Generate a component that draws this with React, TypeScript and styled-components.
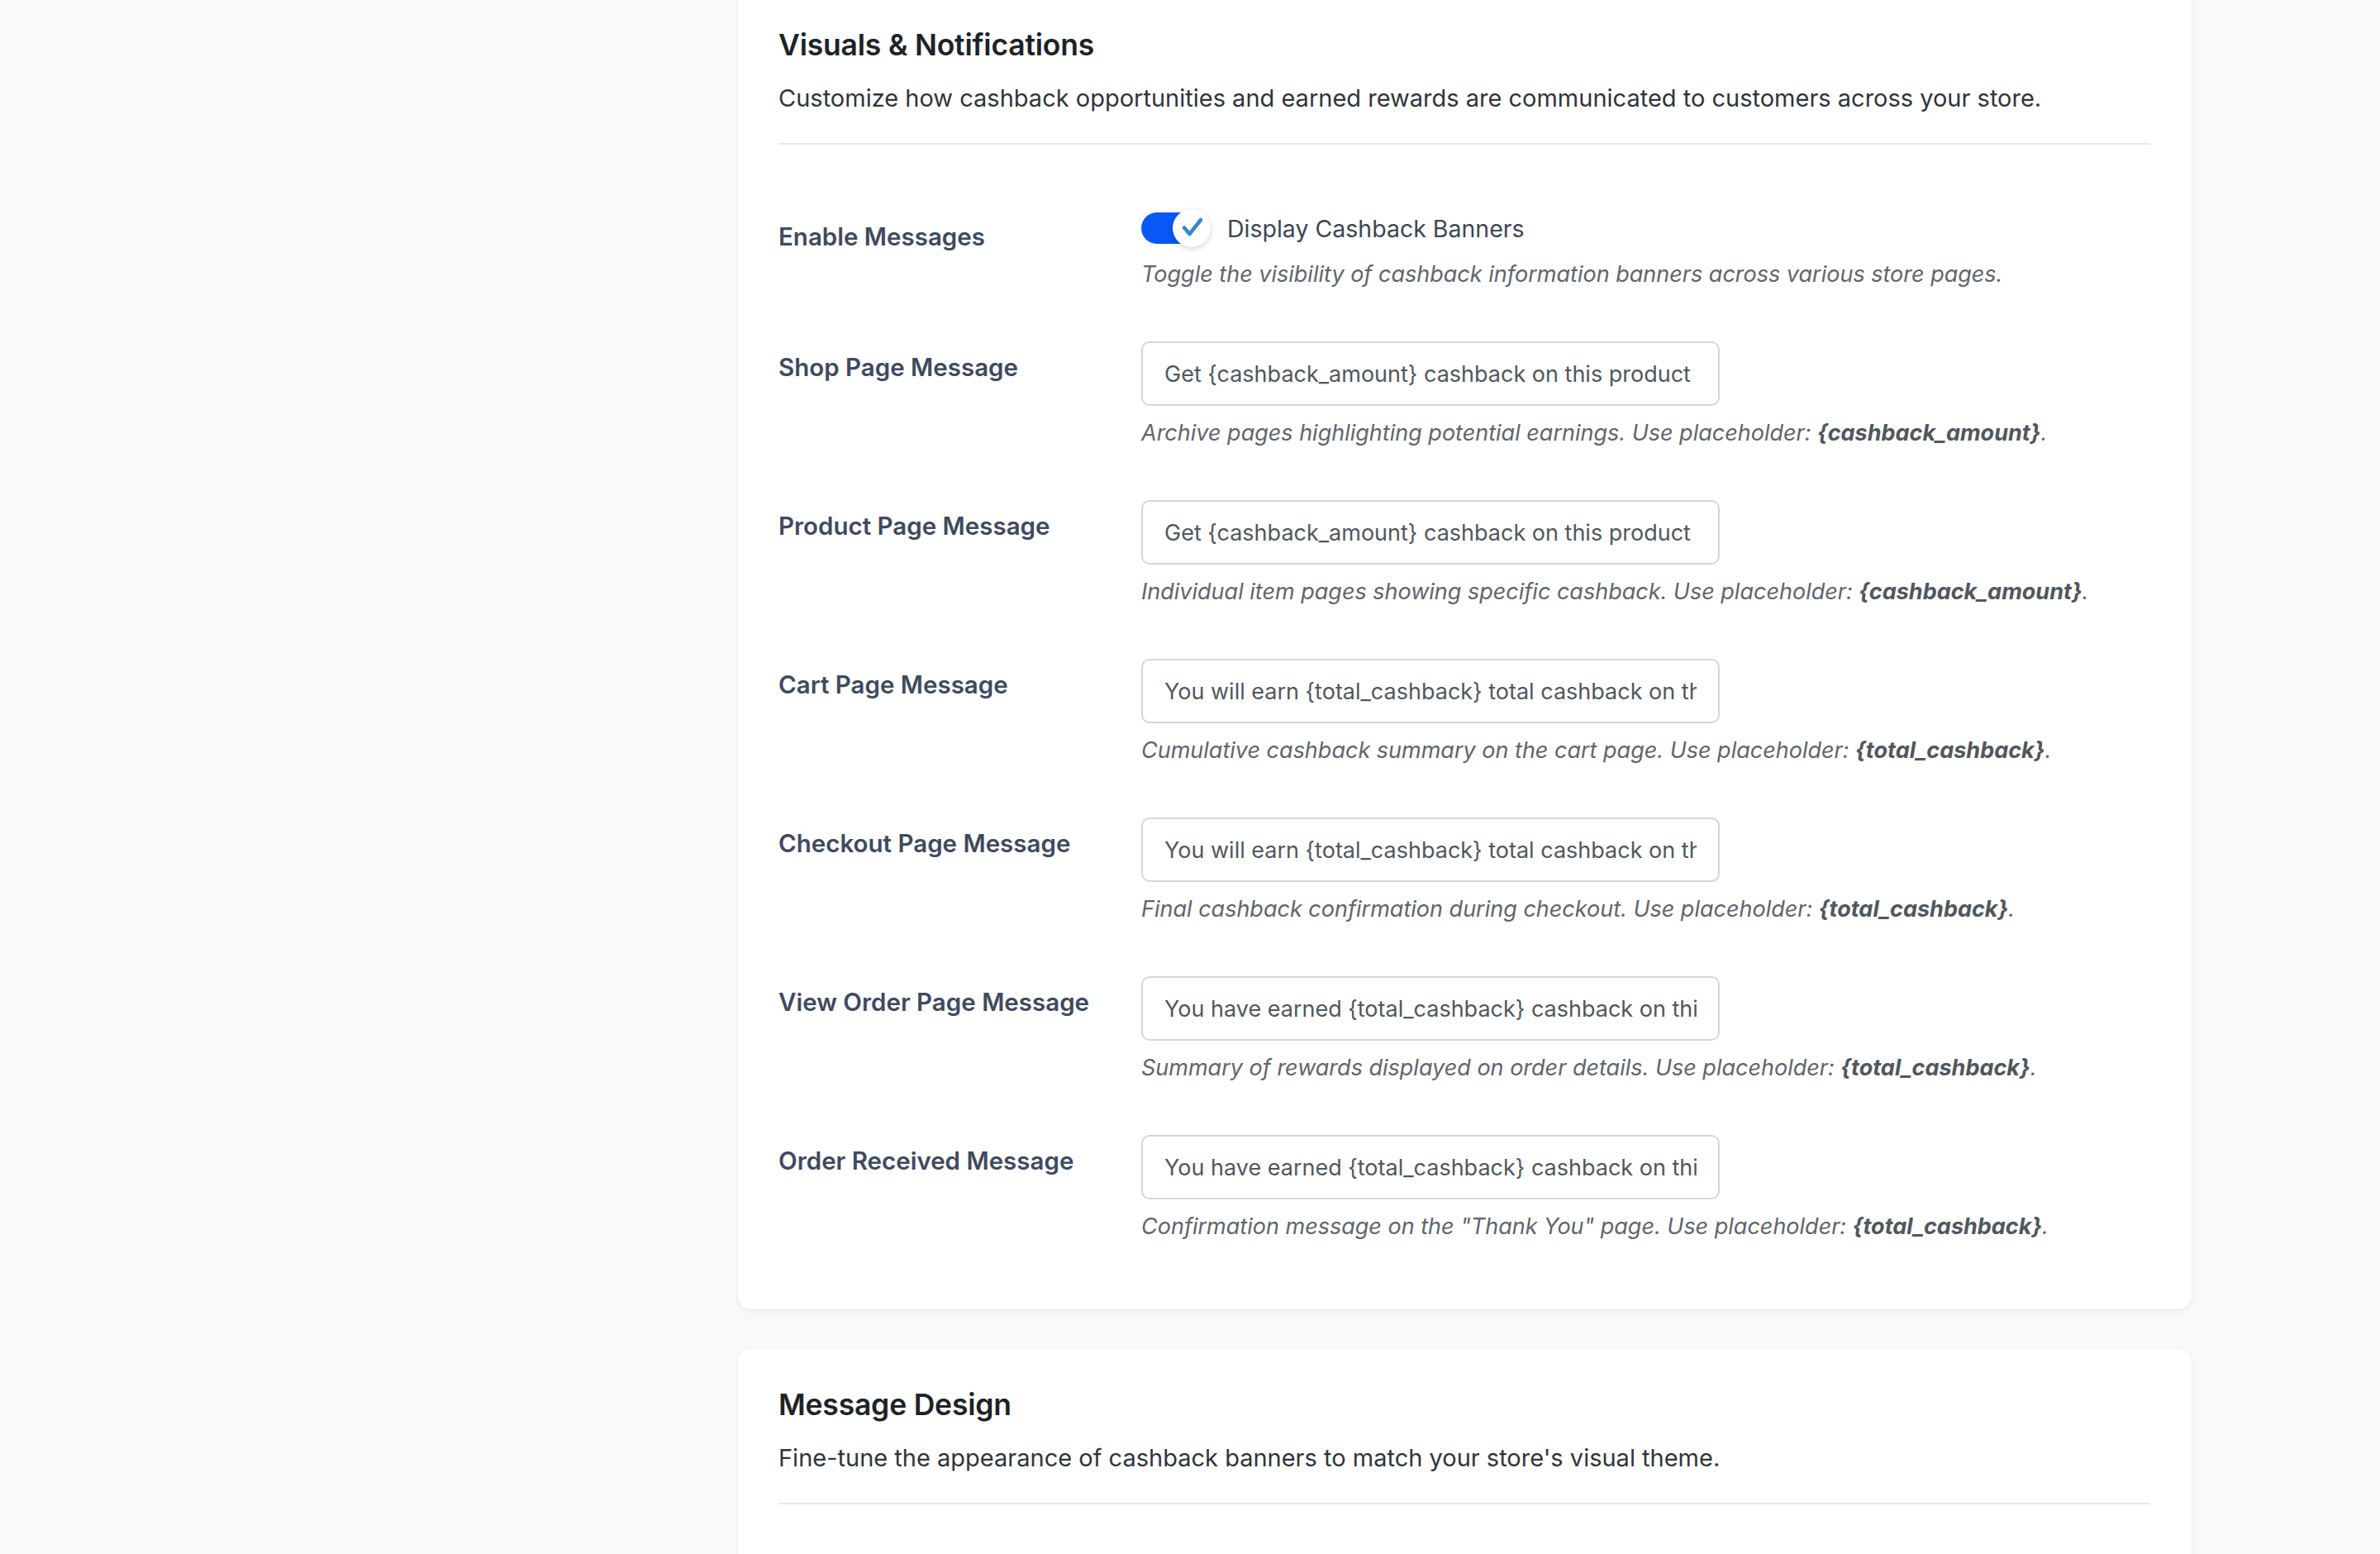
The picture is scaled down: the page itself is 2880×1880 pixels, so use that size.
import React from 'react';
import styled, { createGlobalStyle } from 'styled-components';

const GlobalStyle = createGlobalStyle`
  html, body {
    margin: 0;
    padding: 0;
    background: #f8f9fb;
  }
  body {
    font-family: Inter, "Noto Sans", "Liberation Sans", sans-serif;
    -webkit-font-smoothing: antialiased;
  }
  * {
    box-sizing: border-box;
  }
`;

const Page = styled.div`
  margin-top: -13px;
  padding-left: 893px;
  width: 2652px;
`;

const Card = styled.section<{ $last?: boolean }>`
  background: #ffffff;
  border-radius: 16px;
  box-shadow: 0 2px 8px rgba(16, 24, 40, 0.05), 0 1px 2px rgba(16, 24, 40, 0.04);
  padding: 44px 50px ${(p) => (p.$last ? '240px' : '50px')} 49px;
  margin-bottom: 48px;
`;

const CardHeader = styled.header`
  padding-bottom: 32px;
  border-bottom: 2px solid #e7e8eb;
`;

const Title = styled.h2`
  margin: 0;
  font-size: 35.5px;
  line-height: 48px;
  font-weight: 600;
  color: #1d2327;
  letter-spacing: -0.2px;
`;

const Intro = styled.p`
  margin: 18px 0 0;
  font-size: 29px;
  line-height: 44px;
  color: #2f353b;
`;

const Form = styled.div`
  margin-top: 44px;
`;

const Row = styled.div`
  display: grid;
  grid-template-columns: 439px 1fr;
  padding: 31px 0 32px;
`;

const Label = styled.div<{ $offset?: number }>`
  padding-top: ${(p) => p.$offset ?? 12}px;
  font-size: 29.5px;
  line-height: 38px;
  font-weight: 600;
  color: #3e4a5e;
`;

const Field = styled.div`
  display: flex;
  flex-direction: column;
`;

const ToggleLine = styled.label`
  display: flex;
  align-items: center;
  height: 46px;
  margin-top: 3px;
  gap: 22px;
  font-size: 28.5px;
  color: #3d4655;
  cursor: pointer;
`;

const Track = styled.span`
  position: relative;
  display: inline-block;
  width: 82px;
  height: 38px;
  border-radius: 19px;
  background: #0758f6;
  flex-shrink: 0;
`;

const Knob = styled.span`
  position: absolute;
  top: -4px;
  right: -2px;
  width: 46px;
  height: 46px;
  border-radius: 50%;
  background: #ffffff;
  box-shadow: 0 2px 6px rgba(0, 0, 0, 0.18);
  display: flex;
  align-items: center;
  justify-content: center;
`;

const TextInput = styled.input`
  width: 700px;
  height: 78px;
  padding: 0 26px;
  border: 2px solid #d4d6da;
  border-radius: 10px;
  background: #ffffff;
  font-family: inherit;
  font-size: 27px;
  color: #50575e;
  outline: none;
`;

const Help = styled.p`
  margin: 15px 0 0;
  font-size: 27px;
  line-height: 36px;
  font-style: italic;
  color: #5f656c;

  strong {
    font-weight: 700;
    color: #50575e;
  }
`;

type MessageRow = {
  label: string;
  value: string;
  help: string;
  token: string;
};

const rows: MessageRow[] = [
  {
    label: 'Shop Page Message',
    value: 'Get {cashback_amount} cashback on this product',
    help: 'Archive pages highlighting potential earnings. Use placeholder: ',
    token: '{cashback_amount}',
  },
  {
    label: 'Product Page Message',
    value: 'Get {cashback_amount} cashback on this product',
    help: 'Individual item pages showing specific cashback. Use placeholder: ',
    token: '{cashback_amount}',
  },
  {
    label: 'Cart Page Message',
    value: 'You will earn {total_cashback} total cashback on this order',
    help: 'Cumulative cashback summary on the cart page. Use placeholder: ',
    token: '{total_cashback}',
  },
  {
    label: 'Checkout Page Message',
    value: 'You will earn {total_cashback} total cashback on this order',
    help: 'Final cashback confirmation during checkout. Use placeholder: ',
    token: '{total_cashback}',
  },
  {
    label: 'View Order Page Message',
    value: 'You have earned {total_cashback} cashback on this order',
    help: 'Summary of rewards displayed on order details. Use placeholder: ',
    token: '{total_cashback}',
  },
  {
    label: 'Order Received Message',
    value: 'You have earned {total_cashback} cashback on this order',
    help: 'Confirmation message on the "Thank You" page. Use placeholder: ',
    token: '{total_cashback}',
  },
];

const Check = () => (
  <svg width="46" height="46" viewBox="0 0 46 46" fill="none">
    <path
      d="M14 22.5 L20.5 30 L34 13"
      stroke="#3a86c8"
      strokeWidth="4.5"
      strokeLinecap="round"
      strokeLinejoin="round"
    />
  </svg>
);

const App = () => {
  return (
    <Page>
      <GlobalStyle />

      {/* Visuals & Notifications */}
      <Card>
        <CardHeader>
          <Title>Visuals &amp; Notifications</Title>
          <Intro>
            Customize how cashback opportunities and earned rewards are communicated to customers across your store.
          </Intro>
        </CardHeader>

        <Form>
          <Row>
            <Label $offset={17}>Enable Messages</Label>
            <Field>
              <ToggleLine>
                <Track>
                  <Knob>
                    <Check />
                  </Knob>
                </Track>
                Display Cashback Banners
              </ToggleLine>
              <Help>Toggle the visibility of cashback information banners across various store pages.</Help>
            </Field>
          </Row>

          {rows.map((row) => (
            <Row key={row.label}>
              <Label>{row.label}</Label>
              <Field>
                <TextInput type="text" defaultValue={row.value} />
                <Help>
                  {row.help}
                  <strong>{row.token}</strong>.
                </Help>
              </Field>
            </Row>
          ))}
        </Form>
      </Card>

      {/* Message Design */}
      <Card $last>
        <CardHeader>
          <Title>Message Design</Title>
          <Intro>Fine-tune the appearance of cashback banners to match your store's visual theme.</Intro>
        </CardHeader>
      </Card>
    </Page>
  );
};

export default App;
